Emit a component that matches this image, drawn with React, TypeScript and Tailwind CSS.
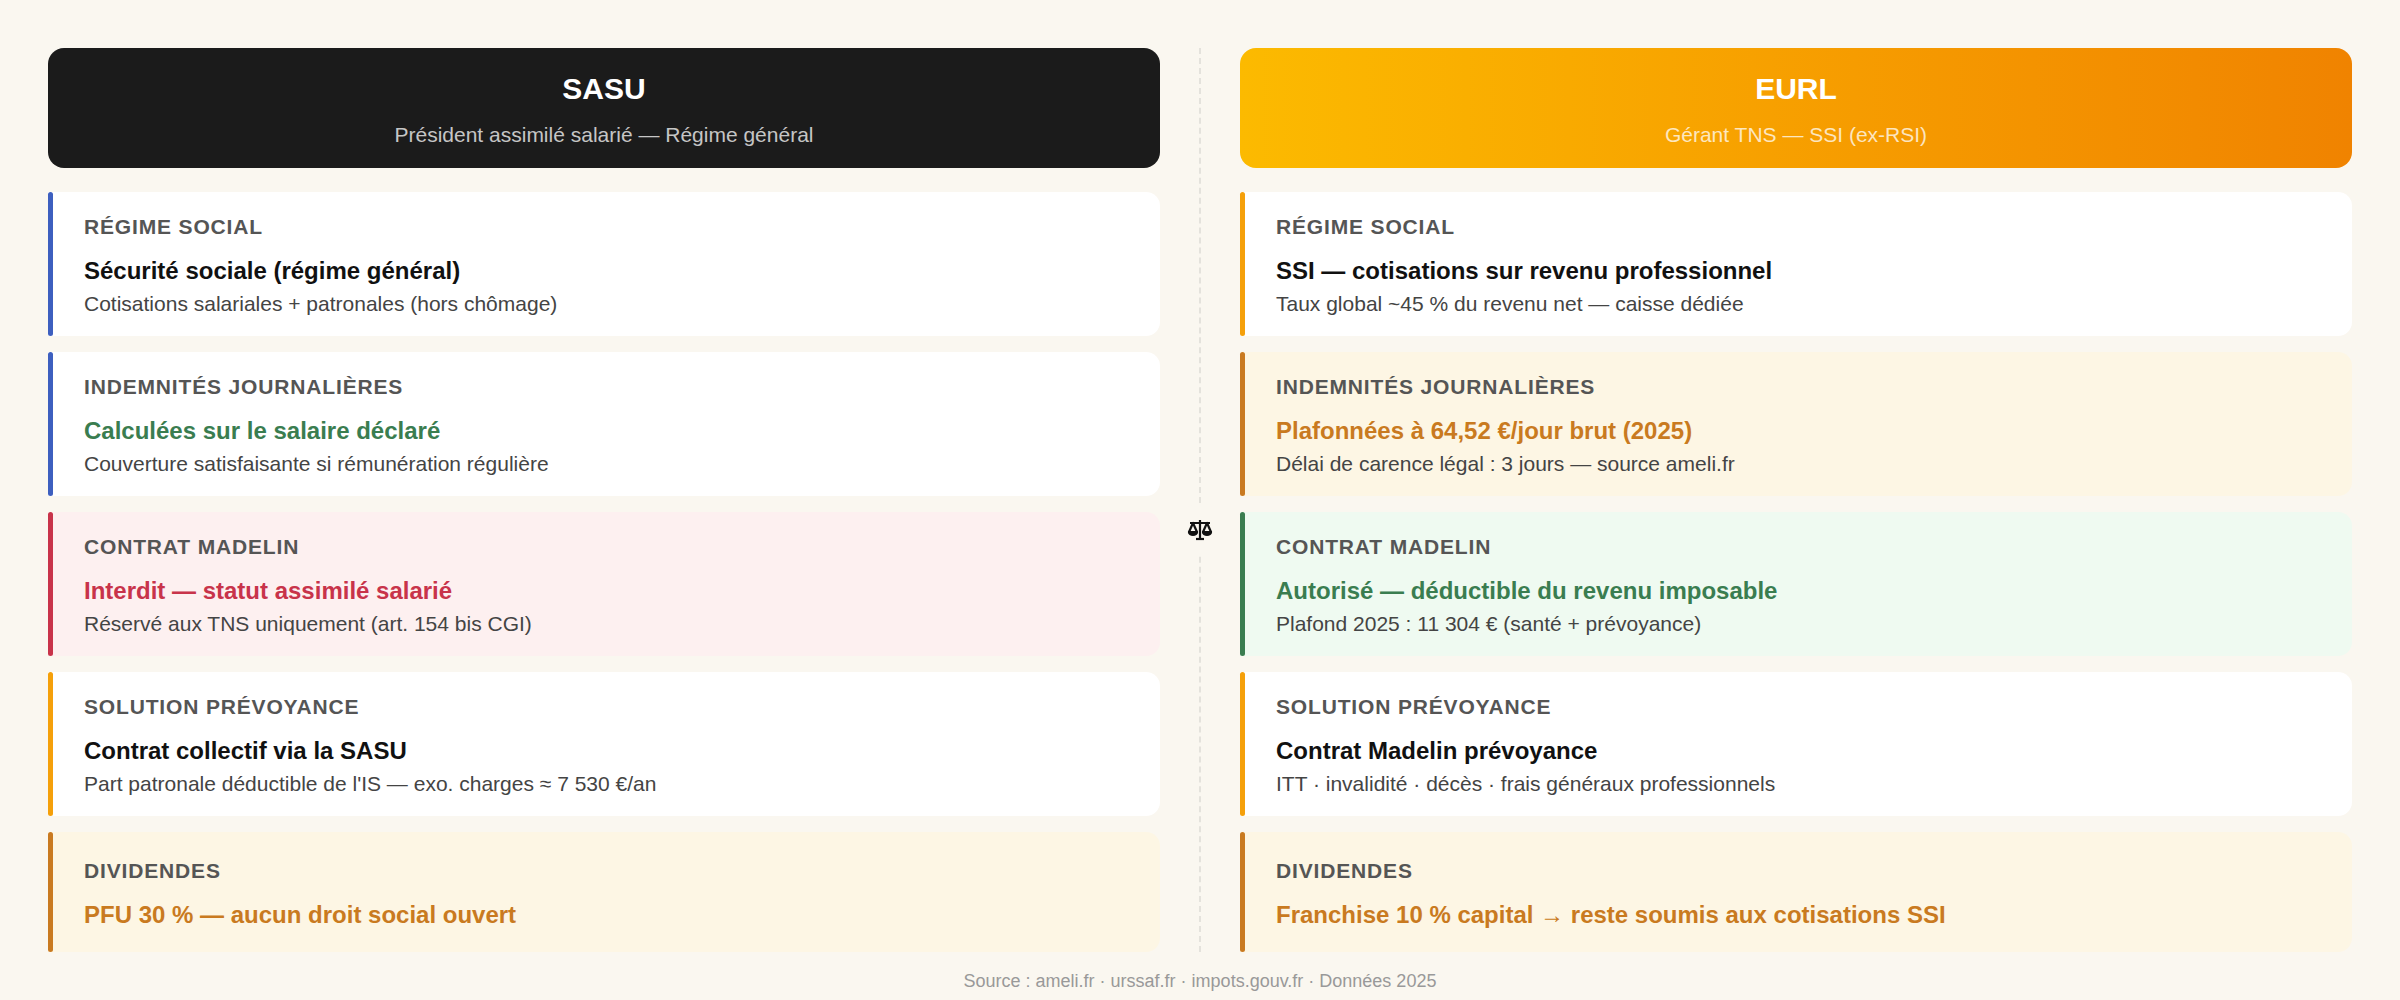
const font = { fontFamily: '"Liberation Sans", Arial, sans-serif' };

type Row = {
  label: string;
  title: string;
  sub?: string;
  bar: string;
  bg: string;
  color: string;
};

const sasu: Row[] = [
  { label: "Régime social", title: "Sécurité sociale (régime général)", sub: "Cotisations salariales + patronales (hors chômage)", bar: "bg-[#3d5fbf]", bg: "bg-white", color: "text-[#111]" },
  { label: "Indemnités journalières", title: "Calculées sur le salaire déclaré", sub: "Couverture satisfaisante si rémunération régulière", bar: "bg-[#3d5fbf]", bg: "bg-white", color: "text-[#3a7d50]" },
  { label: "Contrat Madelin", title: "Interdit — statut assimilé salarié", sub: "Réservé aux TNS uniquement (art. 154 bis CGI)", bar: "bg-[#c8334a]", bg: "bg-[#fdf0f0]", color: "text-[#c8334a]" },
  { label: "Solution prévoyance", title: "Contrat collectif via la SASU", sub: "Part patronale déductible de l'IS — exo. charges ≈ 7 530 €/an", bar: "bg-[#f5a00a]", bg: "bg-white", color: "text-[#111]" },
  { label: "Dividendes", title: "PFU 30 % — aucun droit social ouvert", bar: "bg-[#c97a20]", bg: "bg-[#fdf6e4]", color: "text-[#c97a20]" },
];

const eurl: Row[] = [
  { label: "Régime social", title: "SSI — cotisations sur revenu professionnel", sub: "Taux global ~45 % du revenu net — caisse dédiée", bar: "bg-[#f5a00a]", bg: "bg-white", color: "text-[#111]" },
  { label: "Indemnités journalières", title: "Plafonnées à 64,52 €/jour brut (2025)", sub: "Délai de carence légal : 3 jours — source ameli.fr", bar: "bg-[#c97a20]", bg: "bg-[#fdf6e4]", color: "text-[#c97a20]" },
  { label: "Contrat Madelin", title: "Autorisé — déductible du revenu imposable", sub: "Plafond 2025 : 11 304 € (santé + prévoyance)", bar: "bg-[#3a7d50]", bg: "bg-[#effaf1]", color: "text-[#3a7d50]" },
  { label: "Solution prévoyance", title: "Contrat Madelin prévoyance", sub: "ITT · invalidité · décès · frais généraux professionnels", bar: "bg-[#f5a00a]", bg: "bg-white", color: "text-[#111]" },
  { label: "Dividendes", title: "Franchise 10 % capital → reste soumis aux cotisations SSI", bar: "bg-[#c97a20]", bg: "bg-[#fdf6e4]", color: "text-[#c97a20]" },
];

function Card({ row }: { row: Row }) {
  return (
    <div className={`flex rounded-r-[14px] ${row.bg} ${row.sub ? "h-[144px]" : "h-[120px]"}`}>
      <div className={`w-[5px] rounded-full ${row.bar}`} />
      <div className="flex flex-col justify-center pl-[31px]">
        <div className="text-[21px] font-bold uppercase tracking-[0.04em] text-[#555]">{row.label}</div>
        <div className={`mt-[14px] text-[24px] font-bold leading-[28px] ${row.color}`}>{row.title}</div>
        {row.sub && <div className="mt-[6px] text-[21px] leading-[26px] text-[#444]">{row.sub}</div>}
      </div>
    </div>
  );
}

function Column({ title, sub, head, rows }: { title: string; sub: string; head: string; rows: Row[] }) {
  return (
    <div className="flex flex-1 flex-col gap-4">
      <div className={`mb-2 flex h-[120px] flex-col items-center justify-center rounded-[16px] ${head}`}>
        <div className="text-[30px] font-bold text-white">{title}</div>
        <div className="mt-2 text-[21px] text-white/75">{sub}</div>
      </div>
      {rows.map((r) => (
        <Card key={r.label} row={r} />
      ))}
    </div>
  );
}

export default function App() {
  return (
    <div style={font} className="h-[1000px] w-[2400px] bg-[#faf7f0] px-[48px] pt-[48px]">
      <div className="relative flex gap-[80px]">
        <Column title="SASU" sub="Président assimilé salarié — Régime général" head="bg-[#1b1b1b]" rows={sasu} />
        <div className="absolute bottom-0 left-[1151px] top-0 border-l-2 border-dashed border-[#e4e2dc]" />
        <div className="absolute left-[1126px] top-[456px] flex h-[52px] w-[52px] items-center justify-center rounded-full bg-[#faf7f0]">
          <svg width="26" height="22" viewBox="0 0 26 22" fill="none" stroke="#111" strokeWidth="2.2" strokeLinejoin="round">
            <path d="M13 1v19M3 4h20M6 4l-4 9h8zM20 4l-4 9h8z" />
            <path d="M2 13a4 3 0 0 0 8 0zM16 13a4 3 0 0 0 8 0z" fill="#111" />
            <path d="M9 20h8" />
          </svg>
        </div>
        <Column title="EURL" sub="Gérant TNS — SSI (ex-RSI)" head="bg-gradient-to-r from-[#fcba00] to-[#f08300]" rows={eurl} />
      </div>
      <div className="mt-[16px] text-center text-[18px] text-[#999]">Source : ameli.fr · urssaf.fr · impots.gouv.fr · Données 2025</div>
    </div>
  );
}
